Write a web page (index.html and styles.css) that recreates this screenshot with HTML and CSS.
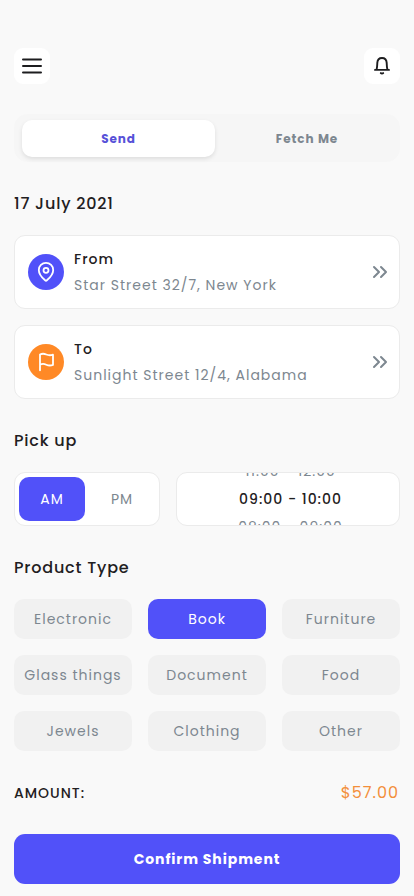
FILE: index.html
```html
<!DOCTYPE html>
<html lang="en">
<head>
<meta charset="utf-8">
<meta name="viewport" content="width=device-width, initial-scale=1">
<title>Send a shipment</title>
<link rel="stylesheet" href="styles.css">
</head>
<body>
<main class="screen">
  <header class="topbar">
    <button class="icon-btn" aria-label="Menu">
      <svg width="22" height="18" viewBox="0 0 22 18" fill="none" stroke="#1d1d1f" stroke-width="2" stroke-linecap="round"><path d="M2 2.500h18M2 9h18M2 15.500h18"/></svg>
    </button>
    <button class="icon-btn" aria-label="Notifications">
      <svg width="20" height="20" viewBox="0 0 20 20" fill="none" stroke="#1d1d1f" stroke-width="1.900" stroke-linecap="round"><path d="M3 13.900h14M4.600 13.600C5.200 11.500 5.200 9.500 5.300 6.900 5.500 3.700 7.300 2 10 2s4.500 1.700 4.700 4.900c.1 2.600.1 4.600.7 6.700"/><path d="M8.800 17.100c.6.600 1.800.600 2.400 0"/></svg>
    </button>
  </header>

  <nav class="segment">
    <button class="segment-item segment-active">Send</button>
    <button class="segment-item">Fetch Me</button>
  </nav>

  <h2 class="heading heading-date">17 July 2021</h2>

  <section class="places">
    <article class="place">
      <div class="place-icon place-from">
        <svg width="24" height="24" viewBox="0 0 24 24" fill="none" stroke="#fff" stroke-width="1.800"><path d="M12 2.900c-4 0-7.200 3.100-7.200 7 0 4.700 3.900 8.300 6.300 10.400.5.500 1.300.5 1.800 0 2.400-2.100 6.300-5.700 6.300-10.400 0-3.900-3.200-7-7.200-7z"/><circle cx="12" cy="10.300" r="2.500"/></svg>
      </div>
      <div class="place-text">
        <h3 class="place-title">From</h3>
        <p class="place-address">Star Street 32/7, New York</p>
      </div>
      <svg class="more" width="16" height="14" viewBox="0 0 16 14" fill="none" stroke="#7d8790" stroke-width="2" stroke-linecap="round" stroke-linejoin="round"><path d="M2 2l5 5-5 5M9 2l5 5-5 5"/></svg>
    </article>
    <article class="place">
      <div class="place-icon place-to">
        <svg width="24" height="24" viewBox="0 0 24 24" fill="none" stroke="#fff" stroke-width="1.800" stroke-linecap="round" stroke-linejoin="round"><path d="M6 20.300V4.500c2-1 4-1 6.300 0s4.400 1 6.700.2v10.200c-2.300.9-4.500.8-6.700-.2s-4.300-1-6.300 0"/></svg>
      </div>
      <div class="place-text">
        <h3 class="place-title">To</h3>
        <p class="place-address">Sunlight Street 12/4, Alabama</p>
      </div>
      <svg class="more" width="16" height="14" viewBox="0 0 16 14" fill="none" stroke="#7d8790" stroke-width="2" stroke-linecap="round" stroke-linejoin="round"><path d="M2 2l5 5-5 5M9 2l5 5-5 5"/></svg>
    </article>
  </section>

  <h2 class="heading heading-pickup">Pick up</h2>

  <section class="pickup">
    <div class="meridiem">
      <button class="meridiem-item meridiem-active">AM</button>
      <button class="meridiem-item">PM</button>
    </div>
    <div class="times">
      <div class="time">11:00 - 12:00</div>
      <div class="time time-current">09:00 - 10:00</div>
      <div class="time">08:00 - 09:00</div>
    </div>
  </section>

  <h2 class="heading heading-type">Product Type</h2>

  <section class="types">
    <button class="type">Electronic</button>
    <button class="type type-active">Book</button>
    <button class="type">Furniture</button>
    <button class="type">Glass things</button>
    <button class="type">Document</button>
    <button class="type">Food</button>
    <button class="type">Jewels</button>
    <button class="type">Clothing</button>
    <button class="type">Other</button>
  </section>

  <div class="amount">
    <span class="amount-label">AMOUNT:</span>
    <span class="amount-value">$57.00</span>
  </div>

  <button class="confirm">Confirm Shipment</button>
</main>
</body>
</html>
```
FILE: styles.css
```css
* { box-sizing: border-box; }
html, body { height: 100%; }
body {
  margin: 0;
  background: #f9f9f9;
  color: #1f2022;
  font: 400 14px/22px Poppins, Inter, sans-serif;
  letter-spacing: 1px;
  overflow: hidden;
}
h2, h3, p { margin: 0; }
button {
  border: 0;
  padding: 0;
  margin: 0;
  background: none;
  color: inherit;
  font: inherit;
  letter-spacing: inherit;
  white-space: nowrap;
}
svg { display: block; flex: none; }

.screen {
  height: 896px;
  padding: 48px 14px 12px;
  display: flex;
  flex-direction: column;
}
.topbar { display: flex; justify-content: space-between; }
.icon-btn {
  width: 36px;
  height: 36px;
  display: flex;
  align-items: center;
  justify-content: center;
  background: #fff;
  border-radius: 9px;
}

.segment {
  display: flex;
  height: 48px;
  margin-top: 30px;
  padding: 6px 0 5px 8px;
  background: #f6f6f6;
  border-radius: 14px;
  font-size: 12px;
  font-weight: 700;
  letter-spacing: 0.9px;
  color: #7d8790;
}
.segment-item { flex: 0 0 184px; height: 37px; border-radius: 10px; }
.segment-active {
  flex-basis: 193px;
  background: #fff;
  color: #5751d8;
  box-shadow: 0 2px 4px rgba(0, 0, 0, 0.1);
}

.heading {
  font-size: 16px;
  font-weight: 500;
  line-height: 24px;
  letter-spacing: 0.8px;
}
.heading-date { margin-top: 30px; }
.heading-pickup { margin-top: 30px; }
.heading-type { margin-top: 30px; }

.places { display: grid; gap: 16px; margin-top: 19px; }
.place {
  display: flex;
  align-items: center;
  height: 74px;
  padding: 0 11px 0 13px;
  background: #fff;
  border: 1px solid #ebebeb;
  border-radius: 11px;
}
.place-icon {
  width: 36px;
  height: 36px;
  display: flex;
  align-items: center;
  justify-content: center;
  border-radius: 50%;
}
.place-from { background: #5151f9; }
.place-to { background: #ff8926; }
.place-text { flex: 1; padding-left: 10px; white-space: nowrap; }
.place-title { font-size: 14px; font-weight: 500; line-height: 26px; }
.place-address { line-height: 26px; color: #7d8790; }

.pickup { display: flex; gap: 16px; margin-top: 19px; height: 54px; }
.meridiem {
  display: flex;
  width: 146px;
  padding: 4px;
  background: #fff;
  border: 1px solid #ebebeb;
  border-radius: 11px;
  color: #7d8790;
}
.meridiem-item { flex: 0 0 66px; height: 44px; border-radius: 10px; }
.meridiem-item + .meridiem-item { flex-basis: 74px; }
.meridiem-active { background: #5151f9; color: #fff; }
.times {
  flex: 1;
  display: flex;
  flex-direction: column;
  justify-content: center;
  overflow: hidden;
  background: #fff;
  border: 1px solid #ebebeb;
  border-radius: 11px;
  text-align: center;
  padding-left: 5px;
}
.time { flex: none; line-height: 28px; color: #7d8790; }
.time-current { color: #1f2022; font-weight: 500; }

.types {
  display: grid;
  grid-template-columns: repeat(3, 1fr);
  grid-auto-rows: 40px;
  gap: 16px;
  margin-top: 19px;
}
.type { background: #f1f1f1; border-radius: 10px; color: #7d8790; }
.type-active { background: #5151f9; color: #fff; }

.amount {
  display: flex;
  justify-content: space-between;
  align-items: center;
  margin-top: 30px;
  padding-right: 1px;
  height: 24px;
}
.amount-label { font-weight: 500; }
.amount-value { font-size: 16px; color: #f38f3b; }

.confirm {
  margin-top: auto;
  height: 50px;
  border-radius: 11px;
  background: #5151f9;
  color: #fff;
  font-weight: 700;
  letter-spacing: 0.9px;
}
```
